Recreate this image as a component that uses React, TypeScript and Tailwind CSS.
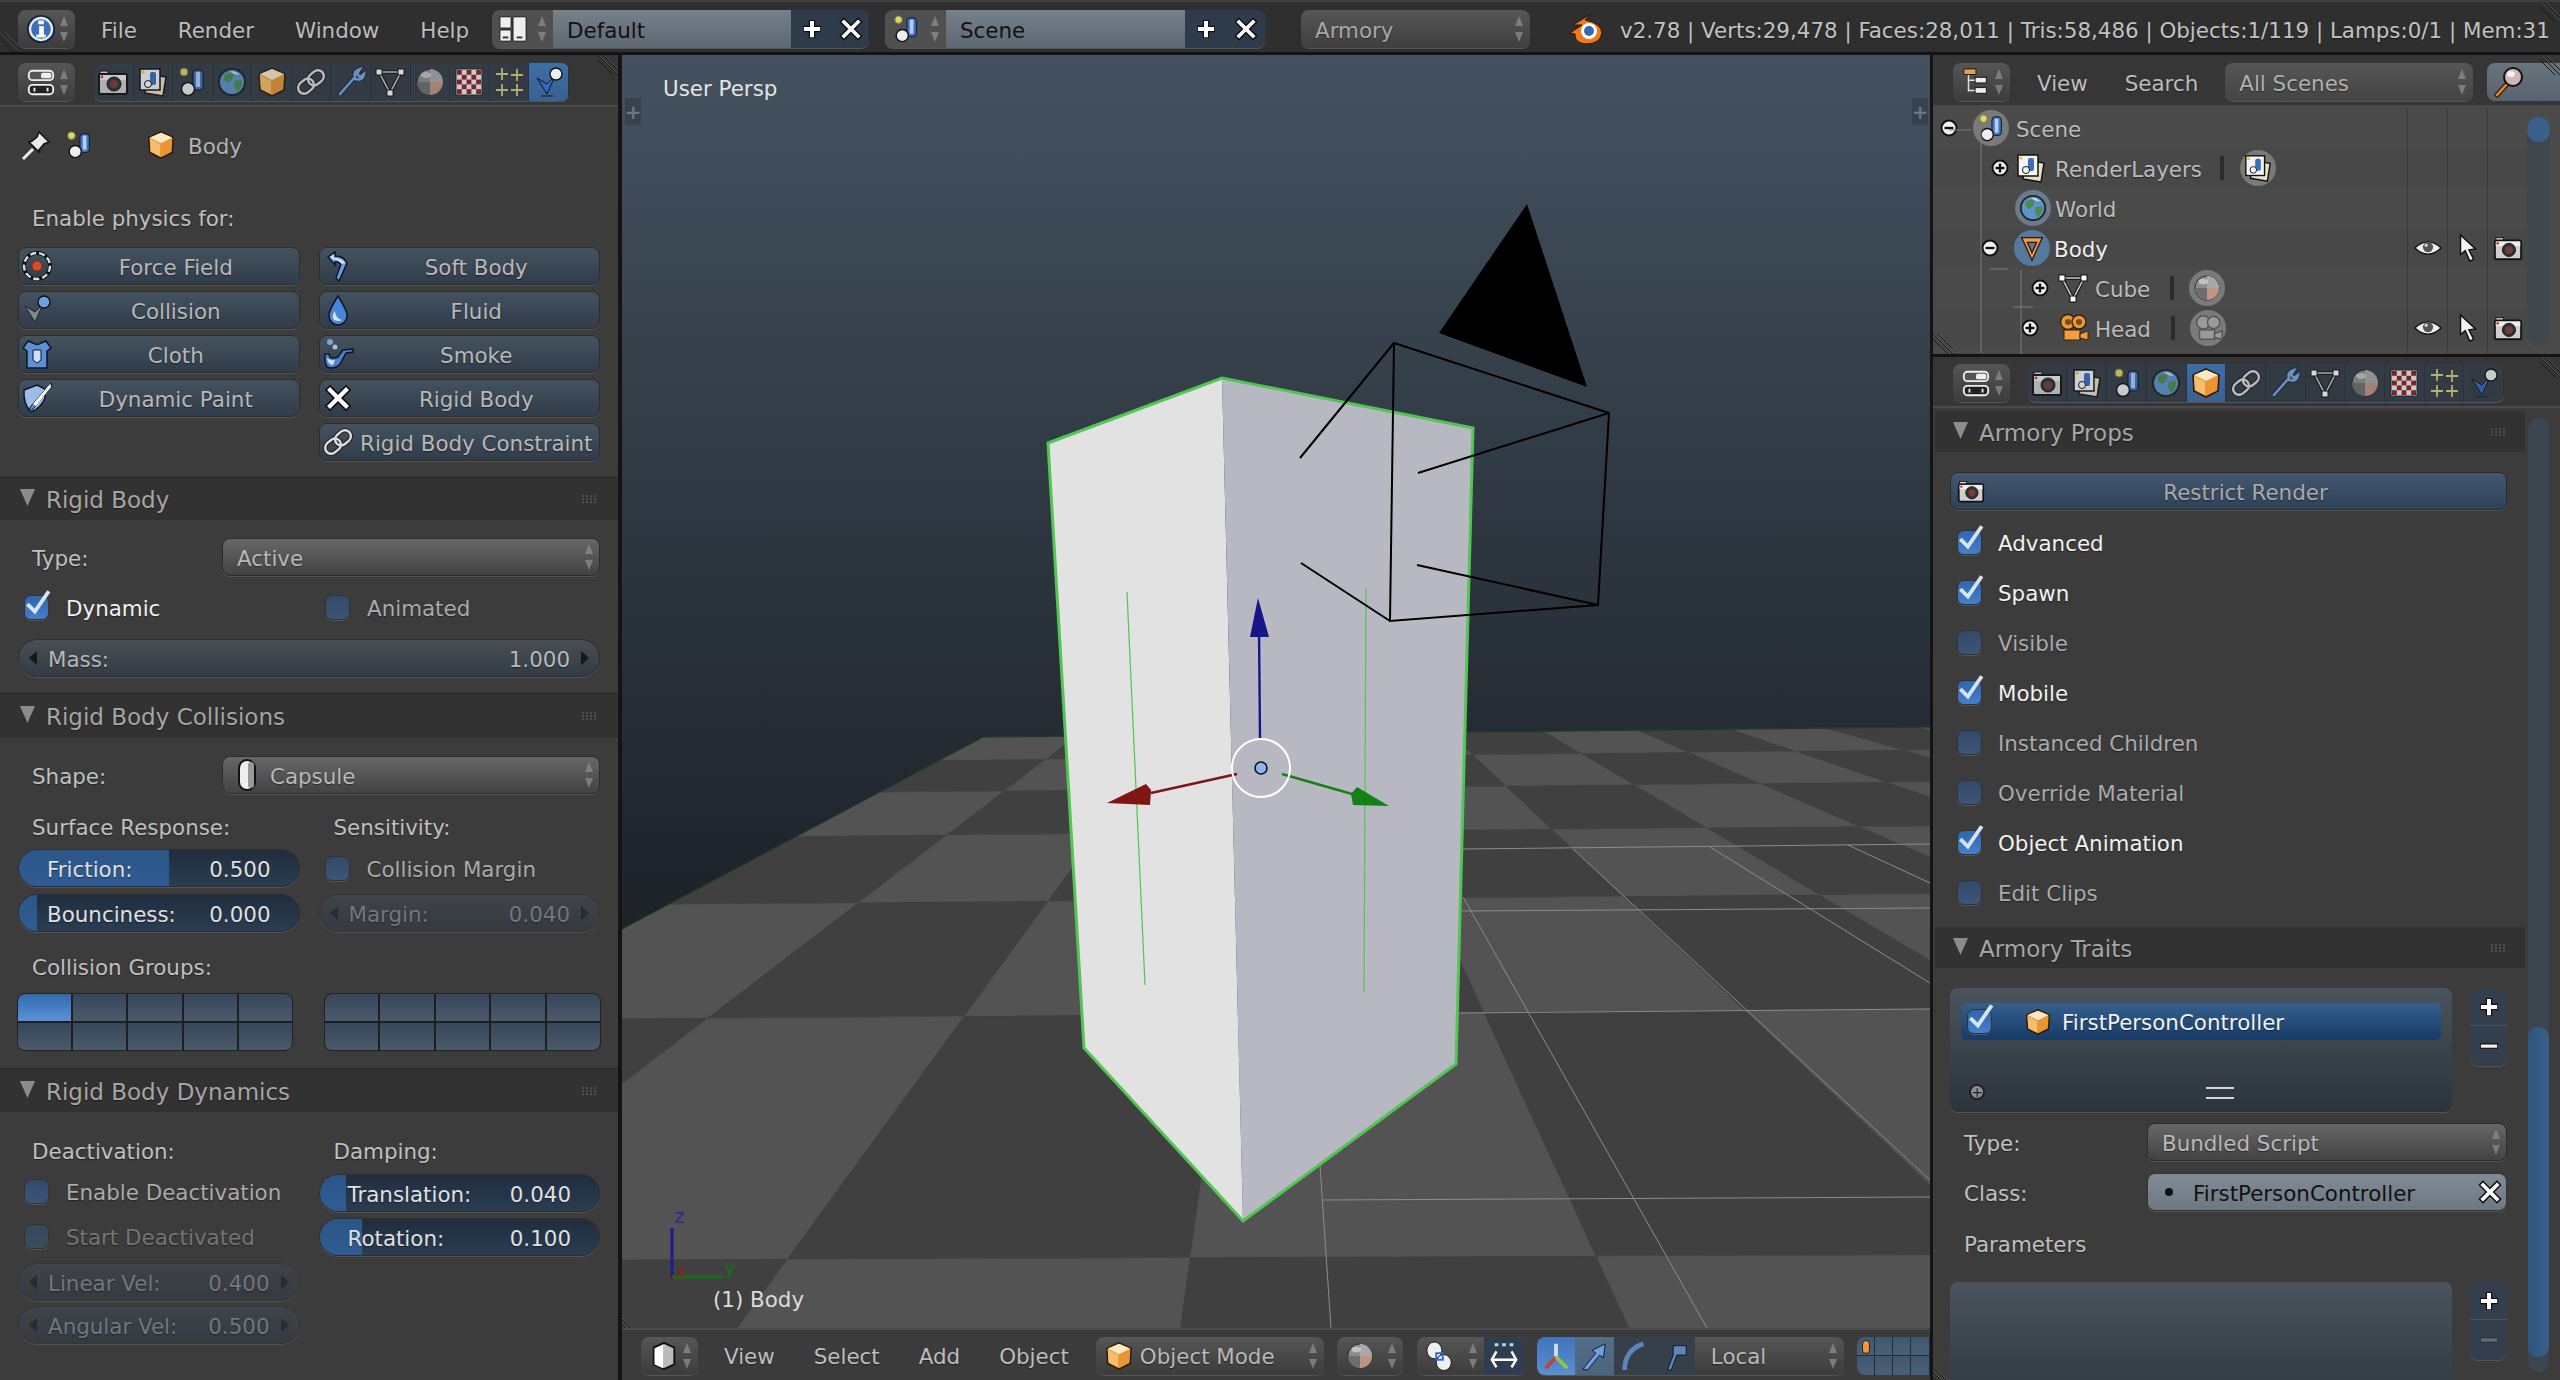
import type { ReactNode } from "react"

// pt nudges the glyphs down to where blender's own text baseline sits
const shadow = "pt-[3px] [text-shadow:0_1px_1px_rgba(0,0,0,0.45)]"

const O = "#111"

// blender's icon sheet, redrawn by hand on a 32 grid
const icons: Record<string, ReactNode> = {
  camera: (
    <>
      <rect x="3" y="5" width="8" height="4" fill="#ddd" stroke={O} />
      <rect x="2" y="8" width="28" height="20" rx="2" fill="#cfcfcf" stroke={O} strokeWidth="2" />
      <rect x="3" y="9" width="26" height="5" fill="#eee" />
      <circle cx="5" cy="11" r="1.4" fill="#e03030" />
      <circle cx="17" cy="18" r="7" fill="#333" stroke={O} />
      <circle cx="17" cy="18" r="4" fill="#7a3a3a" />
    </>
  ),
  layers: (
    <>
      <path d="M10 8 L29 11 L26 30 L8 27 Z" fill="#e8e2c8" stroke={O} strokeWidth="1.5" />
      <rect x="3" y="3" width="20" height="21" fill="#f4f4f4" stroke={O} strokeWidth="1.5" />
      <circle cx="6" cy="6" r="1.6" fill="#dcc83c" />
      <rect x="13" y="6" width="6" height="13" rx="2" fill="#3a6cc0" />
      <circle cx="11" cy="18" r="3.5" fill="#fff" stroke={O} />
    </>
  ),
  scene: (
    <>
      <circle cx="8" cy="6" r="4" fill="#d8d868" stroke="#77773a" />
      <rect x="17" y="4" width="10" height="20" rx="3.5" fill="#3f72c8" stroke={O} />
      <rect x="20" y="6" width="4" height="15" fill="#b5cdf0" />
      <circle cx="12" cy="23" r="6.5" fill="#eee" stroke={O} strokeWidth="1.5" />
    </>
  ),
  world: (
    <>
      <circle cx="16" cy="16" r="13" fill="#5b94cc" stroke="#222" strokeWidth="2" />
      <path d="M8 9 Q14 6 18 8 L16 14 L12 17 L8 14 Z M19 15 L26 14 Q27 21 21 26 L18 20 Z" fill="#4f8a4a" />
      <path d="M14 5 Q20 5 24 9 L18 8 Z" fill="#cfe0ee" />
    </>
  ),
  cube: (
    <>
      <path d="M16 2 L29 8 L28 24 L16 30 L4 24 L3 8 Z" fill="#e89535" stroke="#2a1a08" strokeWidth="1.6" />
      <path d="M16 3 L28 8 L16 14 L4 8 Z" fill="#fde8c6" />
      <path d="M4 9 L15 15 L15 28 L5 23 Z" fill="#f7bd6e" />
    </>
  ),
  link: (
    <g fill="none" transform="rotate(-40 16 16)">
      <rect x="1" y="10" width="17" height="12" rx="6" stroke="#222" strokeWidth="4.5" />
      <rect x="14" y="10" width="17" height="12" rx="6" stroke="#222" strokeWidth="4.5" />
      <rect x="1" y="10" width="17" height="12" rx="6" stroke="#ddd" strokeWidth="2.4" />
      <rect x="14" y="10" width="17" height="12" rx="6" stroke="#ddd" strokeWidth="2.4" />
    </g>
  ),
  wrench: (
    <>
      <path d="M5 28 L20 11 M20 11 Q18 5 25 3 L22 8 L25 11 L29 8 Q28 15 20 13" fill="none" stroke="#1b2c44" strokeWidth="5" strokeLinecap="round" />
      <path d="M5 28 L20 11 M20 11 Q18 5 25 3 L22 8 L25 11 L29 8 Q28 15 20 13" fill="none" stroke="#7ea4dc" strokeWidth="2.6" strokeLinecap="round" />
    </>
  ),
  mesh: (
    <>
      <path d="M5 6 L27 6 L16 27 Z" fill="none" stroke="#111" strokeWidth="3.6" />
      <path d="M5 6 L27 6 L16 27 Z" fill="none" stroke="#c8c8c8" strokeWidth="1.6" />
      <rect x="2" y="3" width="6" height="6" fill="#fff" stroke={O} />
      <rect x="24" y="3" width="6" height="6" fill="#fff" stroke={O} />
      <rect x="13" y="24" width="6" height="6" fill="#fff" stroke={O} />
    </>
  ),
  material: (
    <>
      <circle cx="16" cy="16" r="13" fill="#8c8c8c" stroke="#222" />
      <path d="M16 16 L29 16 A13 13 0 0 1 16 29 Z" fill="#c09482" />
      <path d="M16 16 L3 16 A13 13 0 0 0 16 29 Z" fill="#6e6e6e" />
      <path d="M16 3 A13 13 0 0 1 29 16 L16 16 Z" fill="#a8a8a8" />
      <ellipse cx="12" cy="9" rx="5" ry="3" fill="#d8d8d8" opacity=".7" />
    </>
  ),
  texture: (
    <>
      <rect x="3" y="3" width="26" height="26" fill="#eee" stroke="#222" />
      {[0, 1, 2, 3, 4].map((r) =>
        [0, 1, 2, 3, 4].map((c) =>
          (r + c) % 2 === 0 ? <rect key={`${r}${c}`} x={4 + c * 4.8} y={4 + r * 4.8} width="4.8" height="4.8" fill="#8a2424" /> : null,
        ),
      )}
    </>
  ),
  particles: (
    <g stroke="#d6cc7c" strokeWidth="1.8">
      <path d="M9 2 V14 M3 8 H15" />
      <path d="M24 3 V15 M18 9 H30" />
      <path d="M9 18 V30 M3 24 H15" />
      <path d="M24 18 V30 M18 24 H30" />
    </g>
  ),
  physics: (
    <>
      <path d="M4 12 L14 28 L22 10 L14 18 Z" fill="#2f6cc0" stroke="#111" strokeWidth="1" />
      <circle cx="23" cy="8" r="6" fill="#eee" stroke={O} strokeWidth="1.4" />
      <rect x="8" y="29" width="12" height="2" fill="#222" opacity=".6" />
    </>
  ),
  physicsBlue: (
    <>
      <path d="M4 12 L14 28 L22 10 L14 18 Z" fill="#7e8790" stroke="#222" strokeWidth="1" />
      <circle cx="23" cy="8" r="6" fill="#6ea0e0" stroke={O} strokeWidth="1.4" />
    </>
  ),
  info: (
    <>
      <circle cx="16" cy="16" r="14" fill="#dfe8f5" stroke="#16233a" strokeWidth="2" />
      <circle cx="16" cy="16" r="10.5" fill="#3f6fb8" />
      <rect x="13" y="7" width="6" height="4" fill="#fff" />
      <rect x="14" y="13" width="5" height="10" fill="#fff" />
      <rect x="11" y="22" width="10" height="3" fill="#fff" />
    </>
  ),
  layout: (
    <>
      <rect x="2" y="3" width="12" height="12" rx="1" fill="#eee" stroke={O} />
      <rect x="2" y="17" width="12" height="12" rx="1" fill="#eee" stroke={O} />
      <rect x="16" y="3" width="14" height="26" rx="1" fill="#eee" stroke={O} />
      <rect x="5" y="24" width="6" height="2" fill="#333" />
      <rect x="20" y="24" width="6" height="2" fill="#333" />
    </>
  ),
  panels: (
    <>
      <rect x="3" y="4" width="26" height="10" rx="4" fill="#555" stroke="#eee" strokeWidth="2" />
      <rect x="16" y="6" width="11" height="6" rx="2" fill="#eee" />
      <rect x="3" y="19" width="26" height="10" rx="4" fill="#222" stroke="#eee" strokeWidth="2" />
      <path d="M9 22 V26 M23 22 V26" stroke="#eee" strokeWidth="2" />
    </>
  ),
  pin: (
    <>
      <path d="M19 3 L29 13 L24 15 L19 21 L20 24 L9 13 L12 12 L17 8 Z" fill="#e8e8e8" stroke={O} strokeWidth="1.5" />
      <path d="M13 20 L3 30" stroke="#eee" strokeWidth="3" />
    </>
  ),
  force: (
    <>
      <circle cx="16" cy="16" r="13" fill="none" stroke="#111" strokeWidth="4" />
      <circle cx="16" cy="16" r="13" fill="none" stroke="#ddd" strokeWidth="2.4" strokeDasharray="6 3" />
      <circle cx="16" cy="16" r="5" fill="#dd4a28" stroke="#7a2a18" />
    </>
  ),
  soft: (
    <>
      <path d="M6 7 L13 2 L13 6 Q22 6 25 13 L17 31 L14 28 L19 14 Q15 11 13 12 L13 15 Z" fill="#6f9ee0" stroke="#0c1626" strokeWidth="1.5" />
      <path d="M8 7 L12 4 L12 8 Q20 8 23 13 L20 14 Q14 9 12 10 Z" fill="#cfe0f6" />
    </>
  ),
  drop: (
    <>
      <path d="M16 2 Q26 18 25 22 A9 9 0 0 1 7 22 Q6 18 16 2 Z" fill="#4a86d8" stroke="#0c1626" strokeWidth="1.5" />
      <path d="M13 17 Q9 22 12 26 Q17 28 20 26 Q13 24 13 17 Z" fill="#d6e6fa" />
    </>
  ),
  cloth: (
    <>
      <path d="M7 3 L12 5 Q16 8 20 5 L25 3 L30 10 L26 13 L26 30 L6 30 L6 13 L2 10 Z" fill="#5f90d6" stroke="#0c1626" strokeWidth="1.5" />
      <path d="M12 12 H20 V22 L16 25 L12 22 Z" fill="#cfe0f6" stroke="#0c1626" />
    </>
  ),
  smoke: (
    <>
      <circle cx="8" cy="4" r="3" fill="#88a4c8" />
      <circle cx="13" cy="9" r="2.5" fill="#aabfd8" />
      <path d="M3 16 L7 16 L8 19 Q12 21 16 19 L21 12 L31 11 L31 14 L24 15 L18 26 Q12 32 5 29 Q2 24 3 16 Z" fill="#4f82cc" stroke="#0c1626" strokeWidth="1.5" />
      <path d="M5 20 Q9 23 13 22 L11 27 Q6 27 5 20 Z" fill="#d6e6fa" />
    </>
  ),
  paint: (
    <>
      <path d="M3 8 L16 3 L24 7 L24 16 Q20 26 10 30 Q2 22 3 8 Z" fill="#9dbce8" stroke="#0c1626" strokeWidth="1.5" />
      <path d="M30 1 L10 24 L7 29 L12 27 L31 4 Z" fill="#5f90d6" stroke="#0c1626" />
      <path d="M29 2 L12 22 L15 24 L30 5 Z" fill="#fff" />
    </>
  ),
  x: (
    <>
      <path d="M8 8 L24 24 M24 8 L8 24" stroke="#111" strokeWidth="7.5" strokeLinecap="square" />
      <path d="M8 8 L24 24 M24 8 L8 24" stroke="#fff" strokeWidth="4.2" strokeLinecap="square" />
    </>
  ),
  plus: (
    <>
      <path d="M16 5 V27 M5 16 H27" stroke="#111" strokeWidth="8" />
      <path d="M16 6 V26 M6 16 H26" stroke="#fff" strokeWidth="5" />
    </>
  ),
  minus: (
    <>
      <path d="M5 16 H27" stroke="#111" strokeWidth="7" />
      <path d="M6 16 H26" stroke="#eee" strokeWidth="4" />
    </>
  ),
  capsule: (
    <>
      <rect x="8" y="1" width="16" height="30" rx="8" fill="#eee" stroke={O} strokeWidth="2" />
      <rect x="17" y="3" width="6" height="26" rx="3" fill="#999" />
    </>
  ),
  outliner: (
    <>
      <path d="M8 6 V26 M8 14 H18 M8 25 H18" stroke="#ddd" strokeWidth="1.6" fill="none" />
      <rect x="3" y="2" width="13" height="6" rx="1" fill="#e6a24a" stroke={O} />
      <rect x="15" y="11" width="12" height="6" fill="#eee" stroke={O} />
      <rect x="15" y="22" width="12" height="6" fill="#eee" stroke={O} />
    </>
  ),
  search: (
    <>
      <path d="M4 29 L14 18" stroke="#3a1f08" strokeWidth="5" strokeLinecap="round" />
      <path d="M4 29 L14 18" stroke="#e08a30" strokeWidth="2.5" strokeLinecap="round" />
      <circle cx="20" cy="11" r="9" fill="#cdb8b8" stroke="#111" strokeWidth="2" />
      <ellipse cx="18" cy="8" rx="4" ry="3" fill="#fff" opacity=".8" />
    </>
  ),
  eye: (
    <>
      <path d="M2 16 Q16 3 30 16 Q16 29 2 16 Z" fill="#f2f2f2" stroke={O} strokeWidth="1.4" />
      <circle cx="16" cy="15" r="5.5" fill="#555" />
      <circle cx="14" cy="13" r="1.6" fill="#ddd" />
    </>
  ),
  cursor: <path d="M8 2 L8 23 L13 19 L18 30 L22 28 L17 18 L24 17 Z" fill="#f2f2f2" stroke={O} strokeWidth="1.6" />,
  meshObj: <path d="M5 5 L27 5 L16 29 Z M11 10 L21 10 L16 21 Z" fill="#ec9a45" fillRule="evenodd" stroke="#2a1a08" strokeWidth="1.4" />,
  filmCam: (
    <>
      <circle cx="11" cy="10" r="7.5" fill="#e49a3c" stroke="#3a2008" strokeWidth="1.5" />
      <circle cx="22" cy="10" r="7" fill="#e49a3c" stroke="#3a2008" strokeWidth="1.5" />
      <circle cx="11" cy="10" r="3" fill="#7a4a18" />
      <circle cx="22" cy="10" r="3" fill="#7a4a18" />
      <rect x="7" y="18" width="16" height="10" fill="#f0a040" stroke="#3a2008" />
      <path d="M23 22 L31 19 V28 L23 26 Z" fill="#f0a040" stroke="#3a2008" />
    </>
  ),
  filmGray: (
    <g fill="#9a9a9a" stroke="#555" strokeWidth="1.5">
      <circle cx="11" cy="10" r="7" />
      <circle cx="22" cy="10" r="6.5" />
      <rect x="7" y="18" width="16" height="10" />
      <path d="M23 22 L31 19 V28 L23 26 Z" />
    </g>
  ),
  box: (
    <>
      <path d="M16 2 L27 7 L27 25 L16 30 L5 25 L5 7 Z" fill="#bbb" stroke={O} strokeWidth="2" />
      <path d="M6 8 L15 4 L15 29 L6 25 Z" fill="#fff" />
    </>
  ),
  pivot: (
    <>
      <ellipse cx="10" cy="10" rx="8" ry="9" fill="#eee" stroke={O} />
      <ellipse cx="20" cy="23" rx="8" ry="8.5" fill="#eee" stroke={O} />
      <rect x="12" y="13" width="7" height="7" fill="none" stroke="#2a6ad0" strokeWidth="2" />
    </>
  ),
  align: (
    <>
      <path d="M6 4 H10 M14 4 H18 M22 4 H26" stroke="#bcd3f2" strokeWidth="3" />
      <path d="M8 11 L3 20 L8 28 M24 11 L29 20 L24 28 M4 20 H28" fill="none" stroke="#fff" strokeWidth="2.6" />
    </>
  ),
  axes: (
    <>
      <path d="M16 3 V17" stroke="#cfe0f6" strokeWidth="4" />
      <path d="M16 17 L5 29" stroke="#c64232" strokeWidth="4" />
      <path d="M16 17 L28 29" stroke="#8cc83c" strokeWidth="4" />
    </>
  ),
  arrowTool: <path d="M4 30 L18 13 L14 10 L28 3 L26 18 L22 15 L9 31 Z" fill="#6ea0e0" stroke="#0c1626" />,
  rotTool: <path d="M6 31 Q6 10 26 3" fill="none" stroke="#5f84b8" strokeWidth="5" />,
  scaleTool: <path d="M8 31 L14 15 L14 5 L28 5 L28 15 L18 15 L12 31 Z" fill="#5f84b8" stroke="#0c1626" />,
}

function Icon({ name, size = 32, className = "" }: { name: string; size?: number; className?: string }) {
  return (
    <svg viewBox="0 0 32 32" width={size} height={size} className={`shrink-0 ${className}`}>
      {icons[name]}
    </svg>
  )
}

function UpDown() {
  return (
    <svg viewBox="0 0 10 30" width="10" height="30" className="shrink-0">
      <path d="M5 2 L9 12 L1 12 Z M1 18 L9 18 L5 28 Z" fill="#8c8c8c" opacity=".75" />
    </svg>
  )
}

function Hatch({ className }: { className: string }) {
  return (
    <svg viewBox="0 0 20 20" className={`absolute h-[20px] w-[20px] ${className}`}>
      <path d="M0 0 L20 20 M5 0 L20 15 M0 5 L15 20" stroke="#1a1a1a" strokeWidth="1" />
      <path d="M1 0 L20 19 M6 0 L20 14" stroke="#666" strokeWidth=".7" />
    </svg>
  )
}

// icon + spinner button that opens an editor menu
function MenuBtn({ icon, className = "w-[57px]" }: { icon: string; className?: string }) {
  return (
    <div className={`flex h-[38px] shrink-0 items-center justify-between rounded-[8px] bg-linear-to-b from-[#565656] to-[#3c3c3c] pl-[8px] pr-[6px] shadow-[0_1px_0_#555] ${className}`}>
      <Icon name={icon} size={30} />
      <UpDown />
    </div>
  )
}

function MenuText({ children, className = "" }: { children: ReactNode; className?: string }) {
  return <span className={`text-[#bdbdbd] ${shadow} ${className}`}>{children}</span>
}

function Tabs({ active, className }: { active: string; className: string }) {
  const names = ["camera", "layers", "scene", "world", "cube", "link", "wrench", "mesh", "material", "texture", "particles", "physics"]
  return (
    <div className={`flex h-[38px] overflow-hidden rounded-[8px] bg-[#333b44] shadow-[0_1px_0_#555] ${className}`}>
      {names.map((n) => (
        <div key={n} className={`flex h-[38px] flex-1 items-center justify-center border-r border-[#2b323a] ${n === active ? "bg-linear-to-b from-[#3d6ea8] to-[#3a6190]" : ""}`}>
          <Icon name={n} size={32} className={n === active ? "" : "opacity-80"} />
        </div>
      ))}
    </div>
  )
}

function ActionBtn({ icon, label }: { icon: string; label: string }) {
  return (
    <div className="flex h-[38px] items-center rounded-[8px] border border-[#2e2e2e] bg-linear-to-b from-[#45525f] to-[#303c4a] pl-[2px] text-[#b8b8b8] shadow-[0_1px_0_#555]">
      <Icon name={icon} size={32} className="shrink-0" />
      <span className={`flex-1 whitespace-nowrap text-center ${shadow}`}>{label}</span>
    </div>
  )
}

function Dropdown({ label, icon, className = "" }: { label: string; icon?: string; className?: string }) {
  return (
    <div className={`flex h-[38px] items-center rounded-[8px] border border-[#2c2c2c] bg-linear-to-b from-[#676767] to-[#434343] pl-[14px] pr-[5px] text-[#b9b9b9] shadow-[0_1px_0_#555] ${className}`}>
      {icon && <Icon name={icon} size={32} className="-ml-[6px] mr-[7px]" />}
      <span className={`flex-1 whitespace-nowrap ${shadow}`}>{label}</span>
      <UpDown />
    </div>
  )
}

function Chevron({ right = false, dim = false }: { right?: boolean; dim?: boolean }) {
  return (
    <svg viewBox="0 0 8 14" width="8" height="14" className={`shrink-0 ${dim ? "opacity-50" : ""}`}>
      <path d={right ? "M0 0 L8 7 L0 14 Z" : "M8 0 L0 7 L8 14 Z"} fill="#16181b" />
    </svg>
  )
}

function NumField({ label, value, dim = false }: { label: string; value: string; dim?: boolean }) {
  return (
    <div className={`flex h-[38px] items-center rounded-full border pl-[10px] pr-[10px] shadow-[0_1px_0_#555] ${dim ? "border-[#353535] bg-linear-to-b from-[#3f454b] to-[#363b41] text-[#7a7f84] opacity-90" : "border-[#2e2e2e] bg-linear-to-b from-[#484f56] to-[#333b44] text-[#b8b8b8]"}`}>
      <Chevron dim={dim} />
      <span className={`ml-[11px] flex-1 whitespace-nowrap ${shadow}`}>{label}</span>
      <span className={`mr-[11px] ${shadow}`}>{value}</span>
      <Chevron right dim={dim} />
    </div>
  )
}

function Slider({ label, value, fill }: { label: string; value: string; fill: number }) {
  return (
    <div className="relative flex h-[38px] items-center overflow-hidden rounded-full border border-[#2e2e2e] bg-linear-to-b from-[#1f2d3e] to-[#2c3d52] pl-[28px] pr-[28px] text-[#e0e0e0] shadow-[0_1px_0_#555]">
      <div className="absolute inset-y-0 left-0 bg-linear-to-b from-[#2d5688] to-[#2f5c93]" style={{ width: fill }} />
      <span className={`relative flex-1 whitespace-nowrap ${shadow}`}>{label}</span>
      <span className={`relative ${shadow}`}>{value}</span>
    </div>
  )
}

function Tick({ on, dim = false }: { on: boolean; dim?: boolean }) {
  return (
    <div className={`relative h-[25px] w-[25px] shrink-0 rounded-[7px] border border-[#333] shadow-[0_1px_0_#555] ${on ? "bg-linear-to-b from-[#2f66ac] to-[#4580cc]" : dim ? "bg-linear-to-b from-[#38485c] to-[#3c4c60]" : "bg-linear-to-b from-[#33496a] to-[#3d5578]"}`}>
      {on && (
        <svg viewBox="0 0 28 28" width="30" height="30" className="absolute -right-[4px] -top-[8px]">
          <path d="M5 15 L12 22 L25 3" fill="none" stroke="#d9e3ee" strokeWidth="3.6" />
        </svg>
      )}
    </div>
  )
}

function Check({ label, on = false, dim = false, labelClass = "ml-[16px]" }: { label: string; on?: boolean; dim?: boolean; labelClass?: string }) {
  const tone = on ? "text-[#f2f2f2]" : dim ? "text-[#757575]" : "text-[#ababab]"
  return (
    <div className="flex items-center">
      <Tick on={on} dim={dim} />
      <span className={`whitespace-nowrap ${labelClass} ${tone} ${shadow}`}>{label}</span>
    </div>
  )
}

function Grip() {
  return (
    <svg width="16" height="8" viewBox="0 0 16 8" className="shrink-0">
      <path d="M0 1 H16 M0 4 H16 M0 7 H16" stroke="#6a6a6a" strokeWidth="1" strokeDasharray="2 2" />
    </svg>
  )
}

function SectionHead({ title, className }: { title: string; className: string }) {
  return (
    <div className={`flex shrink-0 items-center bg-[#323232] ${className}`}>
      <svg width="15" height="17" viewBox="0 0 15 17" className="mb-[3px] shrink-0">
        <path d="M0 0 H15 L7.5 17 Z" fill="#8c8c8c" />
      </svg>
      <span className={`ml-[11px] flex-1 whitespace-nowrap text-[23px] text-[#a6a6a6] ${shadow}`}>{title}</span>
      <Grip />
    </div>
  )
}

function Label({ children, className = "" }: { children: ReactNode; className?: string }) {
  return <div className={`flex items-center whitespace-nowrap text-[#c0c0c0] ${shadow} ${className}`}>{children}</div>
}

function GroupGrid({ first = false, className }: { first?: boolean; className: string }) {
  return (
    <div className={`grid h-[58px] grid-cols-5 grid-rows-2 gap-[2px] overflow-hidden rounded-[8px] border border-[#222] bg-[#1f1f1f] ${className}`}>
      {Array.from({ length: 10 }).map((_, i) => (
        <div key={i} className={first && i === 0 ? "bg-linear-to-b from-[#3369ac] to-[#5a93da]" : "bg-linear-to-b from-[#37465a] to-[#4a5b6c]"} />
      ))}
    </div>
  )
}

function LeftPanel() {
  return (
    <div className="relative flex h-full w-[618px] shrink-0 flex-col overflow-hidden bg-[#3c3c3c]">
      <Hatch className="right-0 top-0" />
      <div className="flex h-[52px] shrink-0 items-center border-b-2 border-[#4a4a4a] bg-[#363636] pl-[18px] pt-[4px]">
        <MenuBtn icon="panels" />
        <Tabs active="physics" className="ml-[19px] w-[475px]" />
      </div>
      <div className="mt-[19px] flex h-[38px] shrink-0 items-center pl-[20px]">
        <Icon name="pin" size={32} />
        <Icon name="scene" size={30} className="ml-[12px]" />
        <Icon name="cube" size={30} className="ml-[52px]" />
        <span className={`ml-[12px] text-[#b4b4b4] ${shadow}`}>Body</span>
      </div>
      <Label className="ml-[32px] mt-[38px] h-[30px]">Enable physics for:</Label>
      <div className="ml-[18px] mr-[18px] mt-[15px] grid grid-cols-2 gap-x-[19px] gap-y-[6px]">
        <ActionBtn icon="force" label="Force Field" />
        <ActionBtn icon="soft" label="Soft Body" />
        <ActionBtn icon="physicsBlue" label="Collision" />
        <ActionBtn icon="drop" label="Fluid" />
        <ActionBtn icon="cloth" label="Cloth" />
        <ActionBtn icon="smoke" label="Smoke" />
        <ActionBtn icon="paint" label="Dynamic Paint" />
        <ActionBtn icon="x" label="Rigid Body" />
        <div />
        <ActionBtn icon="link" label="Rigid Body Constraint" />
      </div>

      <SectionHead title="Rigid Body" className="mt-[16px] h-[43px] border-t border-[#2a2a2a] pl-[20px] pr-[20px]" />
      <div className="mx-[18px] mt-[18px] flex items-center">
        <Label className="w-[204px] pl-[14px]">Type:</Label>
        <Dropdown label="Active" className="flex-1" />
      </div>
      <div className="ml-[24px] mt-[19px] flex h-[25px] items-center">
        <div className="w-[301px]">
          <Check label="Dynamic" on labelClass="ml-[17px]" />
        </div>
        <Check label="Animated" labelClass="ml-[17px]" />
      </div>
      <div className="mx-[18px] mt-[19px]">
        <NumField label="Mass:" value="1.000" />
      </div>

      <SectionHead title="Rigid Body Collisions" className="mt-[16px] h-[45px] border-t border-[#2a2a2a] pl-[20px] pr-[20px]" />
      <div className="mx-[18px] mt-[18px] flex items-center">
        <Label className="w-[204px] pl-[14px]">Shape:</Label>
        <Dropdown label="Capsule" icon="capsule" className="flex-1" />
      </div>
      <div className="ml-[18px] mr-[18px] mt-[17px] grid grid-cols-2 gap-x-[19px]">
        <div>
          <Label className="h-[30px] pl-[14px]">Surface Response:</Label>
          <div className="mt-[8px]">
            <Slider label="Friction:" value="0.500" fill={150} />
          </div>
          <div className="mt-[7px]">
            <Slider label="Bounciness:" value="0.000" fill={18} />
          </div>
        </div>
        <div>
          <Label className="h-[30px] pl-[15px]">Sensitivity:</Label>
          <div className="ml-[6px] mt-[15px] h-[26px]">
            <Check label="Collision Margin" labelClass="ml-[17px]" />
          </div>
          <div className="mt-[12px]">
            <NumField label="Margin:" value="0.040" dim />
          </div>
        </div>
      </div>
      <Label className="ml-[32px] mt-[19px] h-[30px]">Collision Groups:</Label>
      <div className="ml-[17px] mr-[17px] mt-[12px] flex gap-[31px]">
        <GroupGrid first className="w-[276px]" />
        <GroupGrid className="w-[277px]" />
      </div>

      <SectionHead title="Rigid Body Dynamics" className="mt-[17px] h-[44px] border-t border-[#2a2a2a] pl-[20px] pr-[20px]" />
      <div className="ml-[18px] mr-[18px] mt-[23px] grid grid-cols-2 gap-x-[19px]">
        <div>
          <Label className="h-[30px] pl-[14px]">Deactivation:</Label>
          <div className="ml-[6px] mt-[14px] h-[26px]">
            <Check label="Enable Deactivation" labelClass="ml-[17px]" />
          </div>
          <div className="ml-[6px] mt-[19px] h-[26px]">
            <Check label="Start Deactivated" dim labelClass="ml-[17px]" />
          </div>
          <div className="mt-[13px]">
            <NumField label="Linear Vel:" value="0.400" dim />
          </div>
          <div className="mt-[5px]">
            <NumField label="Angular Vel:" value="0.500" dim />
          </div>
        </div>
        <div>
          <Label className="h-[30px] pl-[15px]">Damping:</Label>
          <div className="mt-[9px]">
            <Slider label="Translation:" value="0.040" fill={26} />
          </div>
          <div className="mt-[6px]">
            <Slider label="Rotation:" value="0.100" fill={42} />
          </div>
        </div>
      </div>
    </div>
  )
}

// floor is one fan of depth lines to a single vanishing point, crossed by rows
const VX = 1284
const VY = 577
const depthAt1260 = [0, 392, 787, 1190, 1598, 2010, 2436, 2861, 3293, 3732, 4170, 4610, 5050]
const rowEnds = [
  [741, 727],
  [764, 750],
  [795, 782],
  [838, 826],
  [905, 894],
  [1019, 1009],
  [1260, 1255],
  [1800, 1800],
]

function floorPt(xb: number, row: number[]) {
  const b = (row[1] - row[0]) / 1308
  const t = (row[0] + 662 * b - VY) / (1260 - VY - b * (xb - VX))
  return `${VX + (xb - VX) * t},${VY + (1260 - VY) * t}`
}

function Scene3D() {
  const cells: ReactNode[] = []
  for (let k = 0; k < rowEnds.length - 1; k++) {
    for (let c = 0; c < depthAt1260.length - 1; c++) {
      const pts = [floorPt(depthAt1260[c], rowEnds[k]), floorPt(depthAt1260[c + 1], rowEnds[k]), floorPt(depthAt1260[c + 1], rowEnds[k + 1]), floorPt(depthAt1260[c], rowEnds[k + 1])]
      const col = (c + k) % 2 === 1 ? "#404041" : "#535354"
      cells.push(<polygon key={`${k}-${c}`} points={pts.join(" ")} fill={col} stroke={col} strokeWidth="0.5" />)
    }
  }
  const grid = [
    [1323, 1200, 1930, 1197],
    [1458, 1013, 1930, 1009],
    [1462, 911, 1930, 908],
    [1463, 849, 1930, 844],
    [1320, 1165, 1331, 1328],
    [1463, 897, 1707, 1328],
    [1573, 849, 1930, 1180],
    [1710, 847, 1930, 983],
    [1848, 845, 1930, 883],
  ]
  return (
    <svg viewBox="622 55 1308 1273" className="absolute inset-0 h-full w-full">
      <defs>
        <linearGradient id="sky" x1="0" y1="55" x2="0" y2="1328" gradientUnits="userSpaceOnUse">
          <stop offset="0" stopColor="#445260" />
          <stop offset="0.52" stopColor="#252c34" />
          <stop offset="0.7" stopColor="#1b2127" />
          <stop offset="1" stopColor="#15191d" />
        </linearGradient>
      </defs>
      <rect x="622" y="55" width="1308" height="1273" fill="url(#sky)" />
      {cells}
      <path d="M622 929 L983 737 L1930 727" fill="none" stroke="#1c3a24" strokeWidth="1.2" />
      {grid.map((l, i) => (
        <line key={i} x1={l[0]} y1={l[1]} x2={l[2]} y2={l[3]} stroke="#8c8c8c" strokeWidth="1" />
      ))}

      <polygon points="1048,443 1222,378 1243,1221 1084,1048" fill="#e2e2e2" />
      <polygon points="1222,378 1473,428 1456,1064 1243,1221" fill="#b8b8c2" />
      <polygon points="1048,443 1222,378 1473,428 1456,1064 1243,1221 1084,1048" fill="none" stroke="#52c552" strokeWidth="3" />
      <line x1="1127" y1="592" x2="1145" y2="985" stroke="#52c552" strokeWidth="1.2" />
      <line x1="1366" y1="588" x2="1364" y2="992" stroke="#52c552" strokeWidth="1.2" />

      <polygon points="1527,204 1439,333 1587,387" fill="#000" />
      <g fill="none" stroke="#000" strokeWidth="2">
        <polygon points="1394,343 1609,413 1598,605 1390,621" />
        <path d="M1394 343 L1300 458 M1609 413 L1418 473 M1390 621 L1301 563 M1598 605 L1417 565" />
      </g>

      <line x1="1260" y1="738" x2="1259" y2="630" stroke="#16168a" strokeWidth="2.4" />
      <polygon points="1258,598 1250,637 1269,637" fill="#16168a" />
      <line x1="1237" y1="774" x2="1151" y2="793" stroke="#7f1515" strokeWidth="2.4" />
      <polygon points="1107,803 1146,784 1151,790 1150,805" fill="#7f1515" />
      <line x1="1282" y1="774" x2="1352" y2="794" stroke="#158015" strokeWidth="2.4" />
      <polygon points="1389,806 1357,787 1351,794 1353,805" fill="#158015" />
      <circle cx="1261" cy="768" r="29" fill="none" stroke="#fff" strokeWidth="2" />
      <circle cx="1261" cy="768" r="6" fill="#8fb5e8" stroke="#111" strokeWidth="1.6" />

      <line x1="672" y1="1228" x2="672" y2="1279" stroke="#1c1c90" strokeWidth="3" />
      <line x1="672" y1="1277" x2="722" y2="1277" stroke="#147014" strokeWidth="3" />
      <circle cx="672" cy="1279" r="2" fill="#8a1f1f" />
    </svg>
  )
}

function Corner({ className }: { className: string }) {
  return (
    <div className={`absolute flex h-[27px] w-[16px] items-center justify-center bg-[#36424e] text-[20px] font-bold leading-none text-[#6d7680] ${className}`}>+</div>
  )
}

function ViewportBar() {
  return (
    <div className="flex h-[52px] shrink-0 items-center overflow-hidden border-t-2 border-[#4a4a4a] bg-[#3b3b3b] pl-[19px] pt-[1px]">
      <MenuBtn icon="box" />
      <MenuText className="ml-[26px]">View</MenuText>
      <MenuText className="ml-[39px]">Select</MenuText>
      <MenuText className="ml-[39px]">Add</MenuText>
      <MenuText className="ml-[39px]">Object</MenuText>
      <div className="ml-[27px] flex h-[38px] w-[228px] shrink-0 items-center rounded-[8px] bg-linear-to-b from-[#565656] to-[#3c3c3c] pl-[8px] pr-[6px] text-[#b9b9b9] shadow-[0_1px_0_#555]">
        <Icon name="cube" size={30} />
        <span className={`ml-[6px] flex-1 whitespace-nowrap ${shadow}`}>Object Mode</span>
        <UpDown />
      </div>
      <MenuBtn icon="material" className="ml-[13px] w-[66px]" />
      <div className="ml-[14px] flex h-[38px] w-[108px] shrink-0 overflow-hidden rounded-[8px] bg-linear-to-b from-[#565656] to-[#3c3c3c] shadow-[0_1px_0_#555]">
        <div className="flex w-[67px] items-center justify-between pl-[8px] pr-[6px]">
          <Icon name="pivot" size={30} />
          <UpDown />
        </div>
        <div className="flex flex-1 items-center justify-center bg-[#2e3e50]">
          <Icon name="align" size={30} />
        </div>
      </div>
      <div className="ml-[12px] flex h-[38px] w-[307px] shrink-0 overflow-hidden rounded-[8px] bg-[#36404b] shadow-[0_1px_0_#555]">
        <div className="flex w-[38px] items-center justify-center bg-linear-to-b from-[#3f74ba] to-[#5a90d0]">
          <Icon name="axes" size={30} />
        </div>
        <div className="flex w-[39px] items-center justify-center bg-linear-to-b from-[#546c88] to-[#4a6580]">
          <Icon name="arrowTool" size={30} />
        </div>
        <div className="flex w-[41px] items-center justify-center">
          <Icon name="rotTool" size={30} />
        </div>
        <div className="flex w-[40px] items-center justify-center">
          <Icon name="scaleTool" size={30} />
        </div>
        <div className="flex flex-1 items-center justify-between bg-linear-to-b from-[#565656] to-[#3c3c3c] pl-[16px] pr-[6px] text-[#b9b9b9]">
          <span className={shadow}>Local</span>
          <UpDown />
        </div>
      </div>
      <div className="relative ml-[13px] grid h-[38px] w-[90px] shrink-0 grid-cols-5 grid-rows-2 gap-[1px] overflow-hidden rounded-l-[8px] bg-[#2c2c2c]">
        {Array.from({ length: 10 }).map((_, i) => (
          <div key={i} className="bg-linear-to-b from-[#3f5870] to-[#4a6078]" />
        ))}
        <div className="absolute left-[5px] top-[3px] h-[14px] w-[8px] rounded-full border border-[#222] bg-[#ee9a3c]" />
      </div>
    </div>
  )
}

function Viewport() {
  return (
    <div className="flex h-full w-[1308px] shrink-0 flex-col">
      <div className="relative flex-1 overflow-hidden">
        <Scene3D />
        <span className="absolute left-[41px] top-[23px] text-[#e4e4e4]">User Persp</span>
        <Corner className="left-[3px] top-[43px]" />
        <Corner className="right-[2px] top-[43px]" />
        <span className="absolute left-[52px] top-[1151px] text-[20px] text-[#2a2a9a]">z</span>
        <span className="absolute left-[102px] top-[1202px] text-[20px] text-[#147014]">y</span>
        <span className="absolute left-[54px] top-[1209px] text-[16px] text-[#8a1f1f]">x</span>
        <span className="absolute left-[91px] top-[1234px] text-[#dcdcdc]">(1) Body</span>
        <Hatch className="-bottom-[8px] -left-[8px]" />
      </div>
      <ViewportBar />
    </div>
  )
}

function RoundIcon({ name, className, bg = "bg-[#7a7a7a]" }: { name: string; className: string; bg?: string }) {
  return (
    <div className={`flex h-[36px] w-[36px] shrink-0 items-center justify-center rounded-full ${bg} ${className}`}>
      <Icon name={name} size={30} />
    </div>
  )
}

function Expander({ open = false, className }: { open?: boolean; className: string }) {
  return (
    <svg viewBox="0 0 18 18" width="18" height="18" className={`shrink-0 ${className}`}>
      <circle cx="9" cy="9" r="7.5" fill="#f2f2f2" stroke="#111" strokeWidth="2" />
      <path d={open ? "M4.5 9 H13.5" : "M4.5 9 H13.5 M9 4.5 V13.5"} stroke="#111" strokeWidth="2.4" />
    </svg>
  )
}

function Bar({ className }: { className: string }) {
  return <div className={`h-[24px] w-[4px] shrink-0 bg-[#2c2c2c] ${className}`} />
}

function OutlinerRow({ odd = false, right = false, children }: { odd?: boolean; right?: boolean; children: ReactNode }) {
  return (
    <div className={`flex h-[40px] shrink-0 items-center ${odd ? "bg-[#484848]" : "bg-[#4a4a4a]"}`}>
      <div className="flex min-w-0 flex-1 items-center">{children}</div>
      <div className="flex h-full w-[40px] shrink-0 items-center justify-center border-l border-[#3a3a3a]">{right && <Icon name="eye" size={30} />}</div>
      <div className="flex h-full w-[40px] shrink-0 items-center justify-center border-l border-[#3a3a3a]">{right && <Icon name="cursor" size={30} />}</div>
      <div className="flex h-full w-[40px] shrink-0 items-center justify-center border-l border-[#3a3a3a]">{right && <Icon name="camera" size={30} />}</div>
    </div>
  )
}

function Outliner() {
  const txt = `whitespace-nowrap text-[#bcbcbc] ${shadow}`
  return (
    <div className="relative flex h-[299px] shrink-0 flex-col overflow-hidden">
      <div className="flex h-[52px] shrink-0 items-center border-b-2 border-[#4a4a4a] bg-[#363636] pl-[20px] pt-[4px]">
        <MenuBtn icon="outliner" />
        <MenuText className="ml-[27px]">View</MenuText>
        <MenuText className="ml-[37px]">Search</MenuText>
        <div className="ml-[27px] flex h-[38px] w-[248px] shrink-0 items-center justify-between rounded-[8px] bg-linear-to-b from-[#565656] to-[#444] pl-[14px] pr-[6px] text-[#b0b0b0] shadow-[0_1px_0_#555]">
          <span className={shadow}>All Scenes</span>
          <UpDown />
        </div>
        <div className="ml-[14px] flex h-[38px] flex-1 items-center rounded-l-[8px] bg-linear-to-b from-[#6a747e] to-[#59636d] pl-[6px]">
          <Icon name="search" size={32} />
        </div>
      </div>
      <div className="relative flex flex-1 bg-[#4a4a4a] pt-[1px]">
        <div className="flex w-[594px] shrink-0 flex-col">
          <OutlinerRow>
            <Expander open className="ml-[7px]" />
            <RoundIcon name="scene" className="ml-[15px]" />
            <span className={`ml-[7px] ${txt}`}>Scene</span>
          </OutlinerRow>
          <OutlinerRow odd>
            <Expander className="ml-[58px]" />
            <Icon name="layers" size={32} className="ml-[6px]" />
            <span className={`ml-[8px] ${txt}`}>RenderLayers</span>
            <Bar className="ml-[18px]" />
            <RoundIcon name="layers" className="ml-[16px]" />
          </OutlinerRow>
          <OutlinerRow>
            <RoundIcon name="world" className="ml-[82px]" bg="bg-[#6c7a8a]" />
            <span className={`ml-[4px] ${txt}`}>World</span>
          </OutlinerRow>
          <OutlinerRow odd right>
            <Expander open className="ml-[48px]" />
            <RoundIcon name="meshObj" className="ml-[15px]" bg="bg-[#55789e]" />
            <span className={`ml-[4px] whitespace-nowrap text-[#f0f0f0] ${shadow}`}>Body</span>
          </OutlinerRow>
          <OutlinerRow>
            <Expander className="ml-[98px]" />
            <Icon name="mesh" size={32} className="ml-[8px]" />
            <span className={`ml-[6px] ${txt}`}>Cube</span>
            <Bar className="ml-[20px]" />
            <RoundIcon name="material" className="ml-[15px]" />
          </OutlinerRow>
          <OutlinerRow odd right>
            <Expander className="ml-[88px]" />
            <Icon name="filmCam" size={32} className="ml-[18px]" />
            <span className={`ml-[6px] ${txt}`}>Head</span>
            <Bar className="ml-[20px]" />
            <RoundIcon name="filmGray" className="ml-[15px]" />
          </OutlinerRow>
          <div className="flex flex-1">
            <div className="flex-1" />
            <div className="w-[40px] border-l border-[#3a3a3a]" />
            <div className="w-[40px] border-l border-[#3a3a3a]" />
            <div className="w-[40px] border-l border-[#3a3a3a]" />
          </div>
        </div>
        <div className="mt-[9px] flex h-[229px] w-[23px] flex-col rounded-full bg-[#3f474f]">
          <div className="h-[25px] rounded-full bg-[#3a5f8a]" />
        </div>
        <svg className="pointer-events-none absolute left-0 top-0 h-full w-[130px]" viewBox="0 0 130 245">
          <path d="M48 21 V245 M16 22 H38 M57 161 H75 M88 162 V255 M80 199 H100" fill="none" stroke="#7d7d7d" strokeWidth="1" />
        </svg>
      </div>
      <Hatch className="right-0 top-0" />
      <Hatch className="bottom-0 left-0" />
    </div>
  )
}

function PlusMinus({ dimMinus = false, className = "" }: { dimMinus?: boolean; className?: string }) {
  return (
    <div className={`flex h-[78px] w-[37px] shrink-0 flex-col overflow-hidden rounded-[8px] bg-[#333f4c] shadow-[0_1px_0_#555] ${className}`}>
      <div className="flex h-[38px] items-center justify-center border-b border-[#4a5763]">
        <Icon name="plus" size={26} />
      </div>
      <div className="flex flex-1 items-center justify-center">
        <Icon name="minus" size={26} className={dimMinus ? "opacity-25" : ""} />
      </div>
    </div>
  )
}

function RightPanel() {
  const rows = [
    ["Advanced", true],
    ["Spawn", true],
    ["Visible", false],
    ["Mobile", true],
    ["Instanced Children", false],
    ["Override Material", false],
    ["Object Animation", true],
    ["Edit Clips", false],
  ] as const
  return (
    <div className="flex h-full w-[627px] shrink-0 flex-col overflow-hidden">
      <Outliner />
      <div className="h-[3px] shrink-0 bg-[#141414]" />
      <div className="relative flex min-h-0 flex-1 flex-col overflow-hidden bg-[#3c3c3c]">
        <Hatch className="right-0 top-0" />
        <Hatch className="-bottom-[8px] -left-[4px]" />
        <div className="flex h-[51px] shrink-0 items-center border-b-2 border-[#4a4a4a] bg-[#363636] pl-[20px] pt-[2px]">
          <MenuBtn icon="panels" />
          <Tabs active="cube" className="ml-[18px] w-[476px]" />
        </div>
        <div className="flex min-h-0 flex-1">
          <div className="w-[592px] shrink-0">
            <SectionHead title="Armory Props" className="ml-[2px] mt-[3px] h-[41px] pl-[18px] pr-[18px]" />
            <div className="ml-[17px] mr-[18px] mt-[20px] flex h-[38px] items-center rounded-[8px] border border-[#2a2a2a] bg-linear-to-b from-[#43586f] to-[#2e4258] pl-[6px] text-[#aaaaaa] shadow-[0_1px_0_#555]">
              <Icon name="camera" size={28} />
              <span className={`flex-1 text-center ${shadow}`}>Restrict Render</span>
            </div>
            <div className="ml-[24px] mt-[7px] flex flex-col">
              {rows.map(([label, on]) => (
                <div key={label} className="flex h-[50px] items-center">
                  <Check label={label} on={on} />
                </div>
              ))}
            </div>
            <SectionHead title="Armory Traits" className="ml-[2px] mt-[10px] h-[41px] pl-[18px] pr-[18px]" />
            <div className="ml-[17px] mr-[18px] mt-[20px] flex items-start">
              <div className="relative flex h-[124px] w-[502px] shrink-0 flex-col rounded-[8px] bg-linear-to-b from-[#4b545d] to-[#2b333c] px-[11px] pt-[15px] shadow-[0_1px_0_#555]">
                <div className="flex h-[37px] items-center rounded-[6px] bg-linear-to-b from-[#36608e] to-[#173a66] pl-[6px] text-[#f2f2f2]">
                  <Tick on />
                  <Icon name="cube" size={28} className="ml-[32px]" />
                  <span className={`ml-[10px] ${shadow}`}>FirstPersonController</span>
                </div>
                <div className="absolute bottom-[12px] left-[19px] flex h-[16px] w-[16px] items-center justify-center rounded-full border-2 border-[#222] bg-[#8a9098] text-[14px] leading-none text-[#222]">+</div>
                <div className="absolute bottom-[13px] left-[256px] flex h-[12px] w-[28px] flex-col justify-between">
                  <div className="h-[2px] bg-[#d6d6d6]" />
                  <div className="h-[2px] bg-[#d6d6d6]" />
                </div>
              </div>
              <PlusMinus className="ml-[18px]" />
            </div>
            <div className="ml-[17px] mr-[18px] mt-[11px] flex items-center">
              <Label className="w-[197px] pl-[14px]">Type:</Label>
              <Dropdown label="Bundled Script" className="flex-1" />
            </div>
            <div className="ml-[17px] mr-[18px] mt-[12px] flex items-center">
              <Label className="w-[197px] pl-[14px]">Class:</Label>
              <div className="flex h-[38px] flex-1 items-center rounded-[8px] border border-[#333] bg-linear-to-b from-[#818b95] to-[#6e7882] pl-[17px] pr-[2px] text-[#111] shadow-[0_1px_0_#555]">
                <div className="h-[8px] w-[8px] rounded-full bg-[#111]" />
                <span className="ml-[20px] flex-1 whitespace-nowrap pt-[3px]">FirstPersonController</span>
                <Icon name="x" size={28} />
              </div>
            </div>
            <Label className="ml-[31px] mt-[17px] h-[30px]">Parameters</Label>
            <div className="ml-[17px] mr-[18px] mt-[24px] flex items-start">
              <div className="h-[140px] w-[502px] shrink-0 rounded-[8px] bg-linear-to-b from-[#4b545d] to-[#2b333c]" />
              <PlusMinus dimMinus className="ml-[18px]" />
            </div>
          </div>
          <div className="ml-[3px] mt-[10px] flex h-[954px] w-[21px] shrink-0 flex-col rounded-full bg-[#3c4651]">
            <div className="mt-[609px] h-[330px] rounded-full bg-linear-to-r from-[#2f5580] to-[#3a5f88]" />
          </div>
        </div>
      </div>
    </div>
  )
}

function TopBar() {
  return (
    <div className="relative flex h-[52px] shrink-0 items-center overflow-hidden border-t-2 border-[#3e3e3e] bg-[#2f2f2f] pl-[18px] pt-[4px]">
      <Hatch className="-left-[2px] bottom-0" />
      <Hatch className="right-0 top-0" />
      <div className="flex w-[474px] shrink-0 items-center">
        <MenuBtn icon="info" />
        <MenuText className="ml-[26px]">File</MenuText>
        <MenuText className="ml-[41px]">Render</MenuText>
        <MenuText className="ml-[41px]">Window</MenuText>
        <MenuText className="ml-[41px]">Help</MenuText>
      </div>
      <div className="flex h-[38px] w-[377px] shrink-0 overflow-hidden rounded-[8px] bg-[#505050] shadow-[0_1px_0_#555]">
        <div className="flex w-[61px] items-center justify-between pl-[6px] pr-[6px]">
          <Icon name="layout" size={30} />
          <UpDown />
        </div>
        <div className="flex flex-1 items-center bg-linear-to-b from-[#76808a] to-[#5e6872] pl-[14px] pt-[3px] text-[#111]">Default</div>
        <div className="flex w-[41px] items-center justify-center bg-[#2e3b4a]">
          <Icon name="plus" size={26} />
        </div>
        <div className="flex w-[37px] items-center justify-center bg-[#2e3b4a]">
          <Icon name="x" size={28} />
        </div>
      </div>
      <div className="ml-[16px] flex h-[38px] w-[380px] shrink-0 overflow-hidden rounded-[8px] bg-[#505050] shadow-[0_1px_0_#555]">
        <div className="flex w-[61px] items-center justify-between pl-[6px] pr-[6px]">
          <Icon name="scene" size={30} />
          <UpDown />
        </div>
        <div className="flex flex-1 items-center bg-linear-to-b from-[#76808a] to-[#5e6872] pl-[14px] pt-[3px] text-[#111]">Scene</div>
        <div className="flex w-[42px] items-center justify-center bg-[#2e3b4a]">
          <Icon name="plus" size={26} />
        </div>
        <div className="flex w-[38px] items-center justify-center bg-[#2e3b4a]">
          <Icon name="x" size={28} />
        </div>
      </div>
      <div className="ml-[36px] flex h-[38px] w-[229px] shrink-0 items-center justify-between rounded-[8px] bg-linear-to-b from-[#565656] to-[#3f3f3f] pl-[14px] pr-[6px] text-[#a8a8a8] shadow-[0_1px_0_#555]">
        <span className={shadow}>Armory</span>
        <UpDown />
      </div>
      <svg viewBox="0 0 36 32" width="36" height="34" className="ml-[39px] shrink-0">
        <path d="M1 20 L13 12 L4 12 L22 1 L16 7 Q32 10 33 20 Q31 31 17 31 Q5 30 6 21 Z" fill="#ea7c1c" stroke="#2a1608" strokeWidth="1" />
        <circle cx="20" cy="18" r="8" fill="#fff" />
        <circle cx="20" cy="18" r="5" fill="#2f6cb8" />
      </svg>
      <span className={`ml-[15px] whitespace-nowrap text-[#c2c2c2] ${shadow}`}>v2.78 | Verts:29,478 | Faces:28,011 | Tris:58,486 | Objects:1/119 | Lamps:0/1 | Mem:31</span>
    </div>
  )
}

export default function App() {
  return (
    <div className="flex h-[1380px] w-[2560px] flex-col overflow-hidden bg-[#141414] font-['DejaVu_Sans',sans-serif] text-[21.4px] leading-none">
      <TopBar />
      <div className="h-[3px] shrink-0 bg-[#141414]" />
      <div className="flex min-h-0 flex-1 gap-[4px]">
        <LeftPanel />
        <div className="flex h-full gap-[3px]">
          <Viewport />
          <RightPanel />
        </div>
      </div>
    </div>
  )
}
